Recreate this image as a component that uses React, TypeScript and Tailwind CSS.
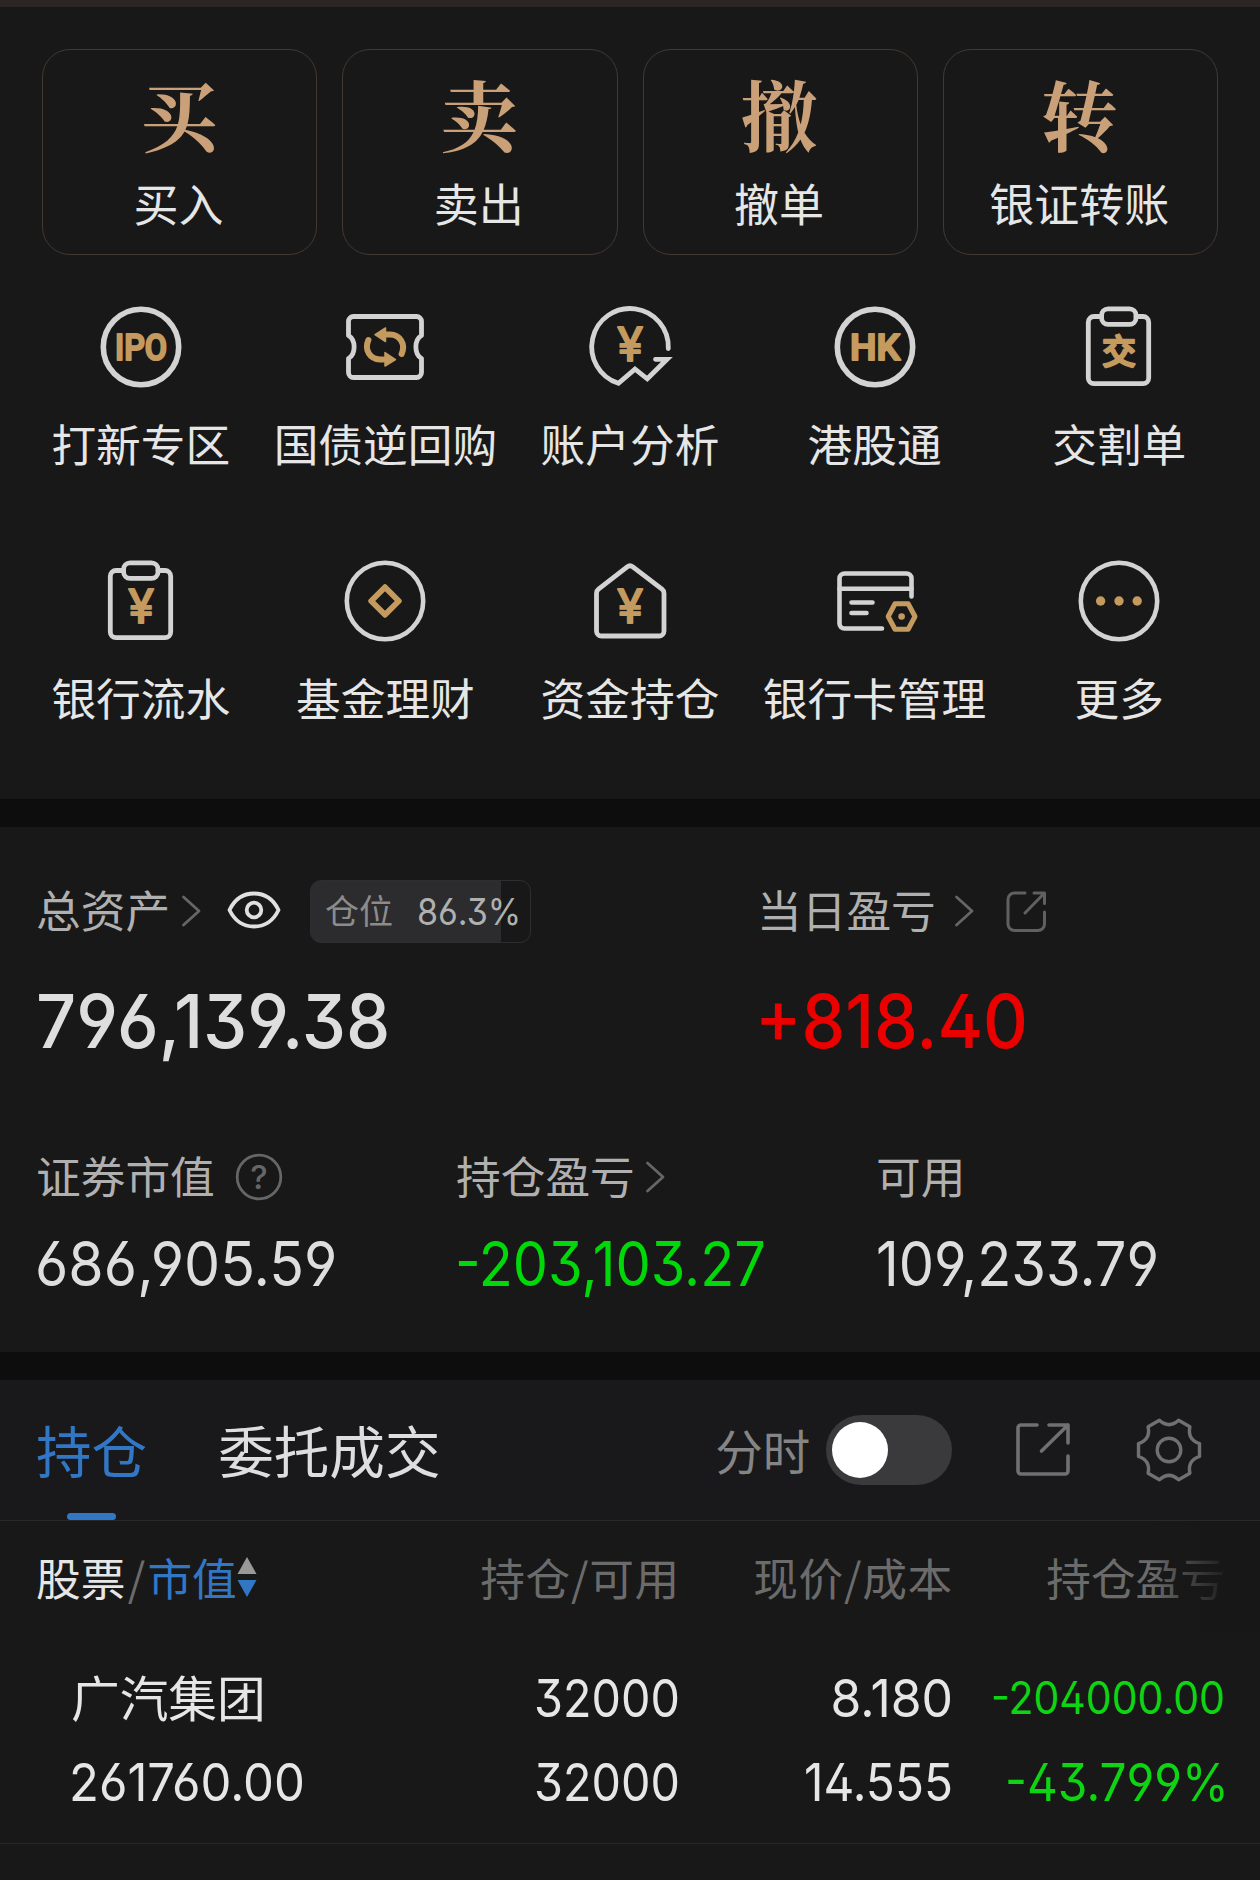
import type { ReactNode } from "react";

const GOLD = "#c49a5f";
const SILVER = "#d3d3d3";

function Icon({ children, width = 5 }: { children: ReactNode; width?: number }) {
  return (
    <svg
      className="size-[90px]"
      viewBox="0 0 90 90"
      fill="none"
      stroke={SILVER}
      strokeWidth={width}
      strokeLinecap="round"
      strokeLinejoin="round"
    >
      {children}
    </svg>
  );
}

function IconText({ children, y, size, length }: { children: string; y: number; size: number; length: number }) {
  return (
    <text
      x={45}
      y={y}
      textAnchor="middle"
      textLength={length}
      lengthAdjust="spacingAndGlyphs"
      fontSize={size}
      fill={GOLD}
      stroke={GOLD}
      strokeWidth={2.2}
      className="font-['Roboto','Noto_Sans_CJK_SC',sans-serif] font-medium"
    >
      {children}
    </text>
  );
}

function Yen({ y }: { y: number }) {
  return (
    <text
      x={45}
      y={y}
      textAnchor="middle"
      fontSize={48}
      fill={GOLD}
      stroke={GOLD}
      strokeWidth={1.8}
      className="font-['Roboto',sans-serif] font-normal"
    >
      ¥
    </text>
  );
}

const clipboard = (
  <>
    <path d="M27.5 14.5H20a5.7 5.7 0 0 0-5.7 5.7V76a5.7 5.7 0 0 0 5.7 5.7H69a5.7 5.7 0 0 0 5.7-5.7V20.2a5.7 5.7 0 0 0-5.7-5.7H62" />
    <rect x="27.6" y="6.8" width="34.4" height="15.6" rx="6.5" />
  </>
);

const actions = [
  { glyph: "买", label: "买入" },
  { glyph: "卖", label: "卖出" },
  { glyph: "撤", label: "撤单" },
  { glyph: "转", label: "银证转账" },
];

const shortcuts: { label: string; icon: ReactNode }[] = [
  {
    label: "打新专区",
    icon: (
      <Icon width={5.6}>
        <circle cx="45" cy="45" r="37.7" />
        <IconText y={57.800} size={36} length={52}>IPO</IconText>
      </Icon>
    ),
  },
  {
    label: "国债逆回购",
    icon: (
      <Icon width={4.8}>
        <path d="M13.5 14.5H76.500a5 5 0 0 1 5 5V33.500C74 38 74 52 81.500 56.500V70.500a5 5 0 0 1-5 5H13.500a5 5 0 0 1-5-5V56.500C16 52 16 38 8.500 33.500V19.500a5 5 0 0 1 5-5Z" />
        <g stroke={GOLD} strokeWidth="6">
          <path d="M46 32.600H50C60 32.900 66 42 61.600 52" />
          <path d="M44 57.400H40C30 57.100 24 48 28.400 38" />
        </g>
        <g fill={GOLD} stroke={GOLD} strokeWidth="1.500">
          <path d="M35 32.600 45.500 26V39.500Z" />
          <path d="M55.500 57.500 45 50.500V64Z" />
        </g>
      </Icon>
    ),
  },
  {
    label: "账户分析",
    icon: (
      <Icon width={4.8}>
        <path strokeLinejoin="miter" d="M83.300 46.500A38.300 38.300 0 1 0 33.400 81.300L50 67.200 62.300 76.800 82 57.300H70.500" />
        <Yen y={59} />
      </Icon>
    ),
  },
  {
    label: "港股通",
    icon: (
      <Icon width={5.6}>
        <circle cx="45" cy="45" r="37.7" />
        <IconText y={57.800} size={36} length={50}>HK</IconText>
      </Icon>
    ),
  },
  {
    label: "交割单",
    icon: (
      <Icon width={4.8}>
        {clipboard}
        <IconText y={62} size={34} length={34}>交</IconText>
      </Icon>
    ),
  },
  {
    label: "银行流水",
    icon: (
      <Icon width={4.8}>
        {clipboard}
        <Yen y={67} />
      </Icon>
    ),
  },
  {
    label: "基金理财",
    icon: (
      <Icon width={4.6}>
        <circle cx="45" cy="45" r="38.2" />
        <path stroke={GOLD} strokeWidth="5.800" d="M45 31.200 58.800 45 45 58.800 31.200 45Z" />
      </Icon>
    ),
  },
  {
    label: "资金持仓",
    icon: (
      <Icon width={4.8}>
        <path d="M42.200 10.800a4.500 4.500 0 0 1 5.600 0L77 33.200a5 5 0 0 1 2 4V75a5 5 0 0 1-5 5H16.500a5 5 0 0 1-5-5V37.200a5 5 0 0 1 2-4Z" />
        <Yen y={66.500} />
      </Icon>
    ),
  },
  {
    label: "银行卡管理",
    icon: (
      <Icon width={4.6}>
        <path d="M81.500 40.500V22.500a5 5 0 0 0-5-5H14.500a5 5 0 0 0-5 5V67.500a5 5 0 0 0 5 5H52" />
        <path d="M9.500 32.800H81.500M21.500 46.500H42.500M21.500 57H36.500" />
        <path stroke={GOLD} strokeWidth="5" d="M65 47.800H78.200L85 60.500 78.200 73.200H65L58.200 60.500Z" />
        <circle cx="71.600" cy="60.500" r="3.300" fill={GOLD} stroke="none" />
      </Icon>
    ),
  },
  {
    label: "更多",
    icon: (
      <Icon width={4.6}>
        <circle cx="45" cy="45" r="38.2" />
        <g fill={GOLD} stroke="none">
          <circle cx="26.600" cy="45" r="4.700" />
          <circle cx="45" cy="45" r="4.700" />
          <circle cx="63.200" cy="45" r="4.700" />
        </g>
      </Icon>
    ),
  },
];

function Chevron({ className }: { className: string }) {
  return (
    <svg className={`h-[32px] w-[20px] shrink-0 ${className}`} viewBox="0 0 20 32" fill="none" stroke="#666" strokeWidth="2.8" strokeLinecap="round" strokeLinejoin="round">
      <path d="M2.500 2 18 16 2.500 30" />
    </svg>
  );
}

function Num({ children, className }: { children: string; className: string }) {
  return (
    <span className={`block whitespace-nowrap font-['Inter',sans-serif] leading-none [font-feature-settings:'ss01','case'] ${className}`}>{children}</span>
  );
}

const metrics = [
  { label: "证券市值", value: "686,905.59", color: "-ml-[1px] text-[#dedede] scale-x-[0.932]", mark: "help" },
  { label: "持仓盈亏", value: "-203,103.27", color: "-ml-[1px] text-[#00d80a] scale-x-[0.908]", mark: "chevron" },
  { label: "可用", value: "109,233.79", color: "text-[#dedede] scale-x-[0.910]", mark: "" },
];

export default function App() {
  return (
    <div className="h-[1880px] w-[1260px] overflow-hidden bg-[#181818] font-['Noto_Sans_CJK_SC',sans-serif] text-[#e6e6e6]">
      <div className="h-[7px] bg-[#2b2624]" />

      <section className="h-[792px]">
        <div className="grid grid-cols-4 gap-[25px] px-[42px] pt-[42px]">
          {actions.map((a) => (
            <div key={a.label} className="flex h-[206px] flex-col items-center rounded-[28px] border border-[#433932] pt-[25px]">
              <span className="mr-[2px] font-['Noto_Serif_CJK_SC','Noto_Sans_CJK_SC',serif] text-[77px] leading-[76px] font-bold text-[#c9a078]">{a.glyph}</span>
              <span className="mt-[22px] mr-[2px] text-[45px] leading-[60px]">{a.label}</span>
            </div>
          ))}
        </div>
        <div className="grid grid-cols-5 px-[18.500px] pt-[47px]">
          {shortcuts.map((s) => (
            <div key={s.label} className="flex h-[254px] flex-col items-center">
              {s.icon}
              <span className="mt-[21px] text-[44.700px] leading-[60px] whitespace-nowrap">{s.label}</span>
            </div>
          ))}
        </div>
      </section>

      <div className="h-[28px] bg-[#0d0d0d]" />

      <section className="h-[525px] pt-[53px] pl-[36px] text-[44.700px] text-[#b0b0b0]">
        <div className="flex h-[63px] items-center">
          <div className="flex w-[722px] items-center">
            <span className="-mt-[5px] leading-[60px] whitespace-nowrap">总资产</span>
            <Chevron className="-mt-[1px] ml-[11px]" />
            <svg className="-mt-[4px] ml-[25px] h-[40px] w-[56px]" viewBox="0 0 56 40" fill="none" stroke="#e0e0e0" strokeWidth="3.8" strokeLinejoin="round">
              <path d="M3.500 20C9 8.500 18 3.500 28 3.500S47 8.500 52.500 20C47 31.500 38 36.500 28 36.500S9 31.500 3.500 20Z" />
              <circle cx="28" cy="20" r="7.300" />
            </svg>
            <div className="ml-[28px] flex h-[63px] w-[221px] items-center rounded-[11px] border border-[#2e2e30] bg-[linear-gradient(90deg,#2c2c2e_190px,#181818_190px)] pl-[14px]">
              <span className="-mt-[3px] shrink-0 text-[34px] leading-[48px] whitespace-nowrap text-[#8c8c8c]">仓位</span>
              <Num className="ml-[24px] origin-left scale-x-[0.920] text-[37px] text-[#b0b0b0]">86.3%</Num>
            </div>
          </div>
          <span className="-mt-[5px] -ml-[1px] leading-[60px] whitespace-nowrap">当日盈亏</span>
          <Chevron className="-mt-[1px] ml-[18px]" />
          <svg className="ml-[31px] size-[42px]" viewBox="0 0 42 42" fill="none" stroke="#606060" strokeWidth="3" strokeLinecap="round" strokeLinejoin="round">
            <path d="M20 2H9.500a6.500 6.500 0 0 0-6.500 6.500V33a6.500 6.500 0 0 0 6.500 6.500H33a6.500 6.500 0 0 0 6.500-6.500V21M29 2H39.500V12.500M39.500 2 20 22" />
          </svg>
        </div>
        <div className="mt-[41px] flex h-[74px] items-center">
          <Num className="w-[719px] shrink-0 origin-left scale-x-[0.951] text-[74px] font-medium text-[#dedede]">796,139.38</Num>
          <Num className="origin-left scale-x-[0.940] text-[74px] font-medium text-[#eb0000]">+818.40</Num>
        </div>
        <div className="mt-[89px] grid grid-cols-[420px_420px_1fr]">
          {metrics.map((m) => (
            <div key={m.label}>
              <div className="flex h-[60px] items-center">
                <span className="-mt-[5px] leading-[60px]">{m.label}</span>
                {m.mark === "help" && (
                  <svg className="ml-[20px] size-[48px]" viewBox="0 0 48 48" fill="none" stroke="#666" strokeWidth="2.8">
                    <circle cx="24" cy="24" r="21.8" />
                    <text x="24" y="36" textAnchor="middle" fontSize="33" fill="#666" stroke="none" className="font-['Inter',sans-serif] font-medium">?</text>
                  </svg>
                )}
                {m.mark === "chevron" && <Chevron className="ml-[10px]" />}
              </div>
              <Num className={`mt-[26px] origin-left text-[61.500px] ${m.color}`}>{m.value}</Num>
            </div>
          ))}
        </div>
      </section>

      <div className="h-[28px] bg-[#0d0d0d]" />

      <section>
        <div className="flex h-[141px] items-center border-b border-[#29292b] bg-[#19191b]">
          <div className="relative ml-[36px] flex h-[140px] items-center pb-[2px] text-[55.600px] leading-[72px] text-[#3177c6]">
            持仓
            <div className="absolute bottom-0 left-[31px] h-[7px] w-[49px] rounded-[4px] bg-[#3177c6]" />
          </div>
          <span className="ml-[71px] w-[497px] pb-[2px] text-[55.600px] leading-[72px] text-[#dedede]">委托成交</span>
          <span className="text-[47.500px] leading-[64px] whitespace-nowrap text-[#858585]">分时</span>
          <div className="ml-[16px] h-[70px] w-[126px] rounded-full bg-[#3a3a3c] p-[7px]">
            <div className="-ml-[1px] size-[56px] rounded-full bg-white" />
          </div>
          <svg className="ml-[62px] size-[58px]" viewBox="0 0 58 58" fill="none" stroke="#707070" strokeWidth="3.6" strokeLinecap="round" strokeLinejoin="round">
            <path d="M23 4H7a3 3 0 0 0-3 3V50a3 3 0 0 0 3 3H51a3 3 0 0 0 3-3V35M35 4H54V22M54 4 27.500 30" />
          </svg>
          <svg className="ml-[62px] size-[70px]" viewBox="-35 -35 70 70" fill="none" stroke="#707070" strokeWidth="3.4" strokeLinejoin="round">
            <path d="M30.500 6.500Q18.200 10.500 20.900 23.200L9.600 29.700Q0 21-9.600 29.700L-20.900 23.200Q-18.200 10.500-30.500 6.500V-6.500Q-18.200-10.500-20.900-23.200L-9.600-29.700Q0-21 9.600-29.700L20.900-23.200Q18.200-10.500 30.500-6.500Z" />
            <circle r="11.8" />
          </svg>
        </div>

        <div className="relative flex h-[112px] items-center pb-[1px] pl-[36px] text-[44.700px] leading-[60px] whitespace-nowrap text-[#6b6b6b]">
          <div className="flex w-[373px] items-center">
            <span className="text-[#e6e6e6]">股票</span>
            <span className="w-[22px] text-center">/</span>
            <span className="text-[#3177c6]">市值</span>
            <svg className="h-[42px] w-[20px]" viewBox="0 0 20 42">
              <path fill="#999" d="M10 1 19.500 18H.5Z" />
              <path fill="#3177c6" d="M10 41 19.500 24H.5Z" />
            </svg>
          </div>
          <span className="w-[271px] text-right tracking-[0.700px]">持仓/可用</span>
          <span className="w-[273px] text-right tracking-[0.700px]">现价/成本</span>
          <span className="w-[272px] text-right">持仓盈亏</span>
          <div className="absolute inset-y-0 right-0 w-[110px] bg-[linear-gradient(90deg,transparent,#171717_75%)]" />
        </div>

        <div className="h-[211px] border-b border-[#262626] pt-[20px] pl-[71px]">
          <div className="flex h-[90px] items-center">
            <span className="w-[339px] pb-[4px] text-[48.700px] leading-[64px]">广汽集团</span>
            <Num className="w-[270px] origin-right scale-x-[0.890] text-right text-[52.500px]">32000</Num>
            <Num className="w-[273px] origin-right scale-x-[0.950] text-right text-[52.500px]">8.180</Num>
            <Num className="w-[272px] origin-right scale-x-[0.922] text-right text-[44.500px] text-[#0ed414]">-204000.00</Num>
          </div>
          <div className="flex h-[79px] items-center">
            <Num className="-ml-[2px] w-[341px] origin-left scale-x-[0.934] text-[52.500px]">261760.00</Num>
            <Num className="w-[270px] origin-right scale-x-[0.890] text-right text-[52.500px]">32000</Num>
            <Num className="w-[273px] origin-right scale-x-[0.910] text-right text-[52.500px]">14.555</Num>
            <Num className="w-[276px] origin-right scale-x-[0.910] text-right text-[52.500px] text-[#0ed414]">-43.799%</Num>
          </div>
        </div>
      </section>
    </div>
  );
}
